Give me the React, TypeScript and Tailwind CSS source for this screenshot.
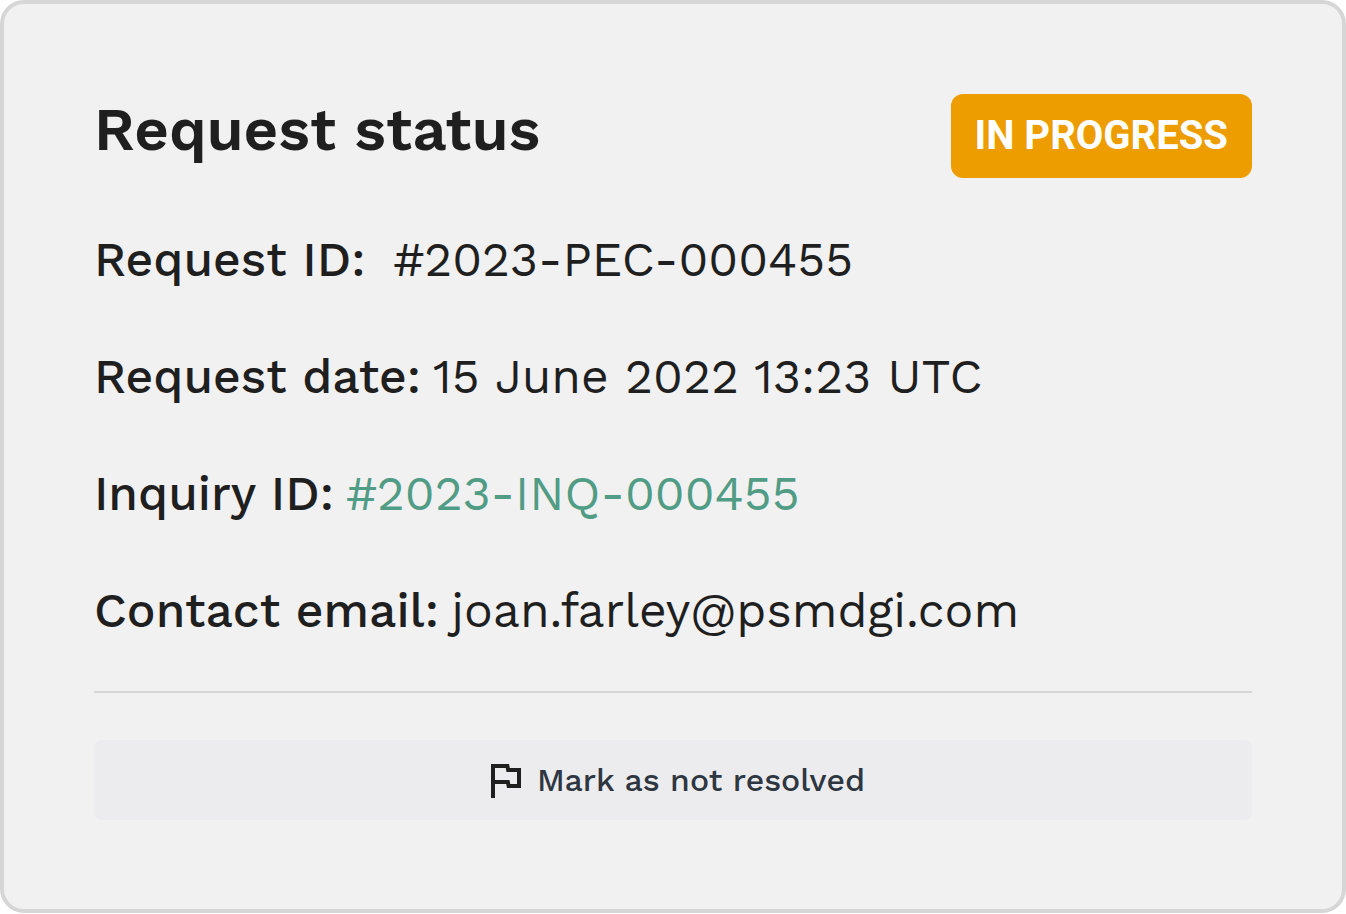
import React from 'react';

type Detail = { label: string; value: string; href?: string; spaced?: boolean };

const details: Detail[] = [
    { label: "Request ID:", value: "#2023-PEC-000455", spaced: true },
    { label: "Request date:", value: "15 June 2022 13:23 UTC" },
    { label: "Inquiry ID:", value: "#2023-INQ-000455", href: "#inquiry" },
    { label: "Contact email:", value: "joan.farley@psmdgi.com" },
];

function FlagIcon() {
    return (
        <svg viewBox="0 0 24 24" className="size-12 shrink-0" fill="#1f1f1f" aria-hidden="true">
            <path d="M12.36 6l.4 2H18v6h-3.36l-.4-2H7V6h5.36M14 4H5v17h2v-7h5.6l.4 2h7V6h-5.6L14 4z" />
        </svg>
    );
}

export default function App() {
    return (
        <section className="rounded-3xl border-4 border-[#d6d6d7] bg-[#f1f1f1] px-[90px] pt-[90px] pb-[89px] font-['Work_Sans',Inter,sans-serif] text-[#1f1f1f]">
            <header className="flex items-start justify-between gap-6">
                <h2 className="text-[60px] leading-[72px] font-semibold">Request status</h2>
                <span className="rounded-xl bg-[#ee9d00] px-6 text-[40px] leading-[84px] font-bold text-white font-[Roboto,sans-serif]">IN PROGRESS</span>
            </header>

            <dl className="mt-[54px] flex flex-col gap-[61px]">
                {details.map((item) => (
                    <div key={item.label} className={`flex flex-wrap text-5xl leading-14 ${item.spaced ? "gap-x-7" : "gap-x-3"}`}>
                        <dt className="font-medium">{item.label}</dt>
                        <dd>
                            {item.href ? <a href={item.href} className="text-[#519c85]">{item.value}</a> : item.value}
                        </dd>
                    </div>
                ))}
            </dl>

            <hr className="mt-[52px] border-t-2 border-[#d6d6d7]" />

            <button type="button" className="mt-[47px] flex h-20 w-full items-center justify-center gap-2 rounded-lg bg-[#ececee] text-[32px] font-medium text-[#2e3641]">
                <FlagIcon />
                Mark as not resolved
            </button>
        </section>
    );
}
